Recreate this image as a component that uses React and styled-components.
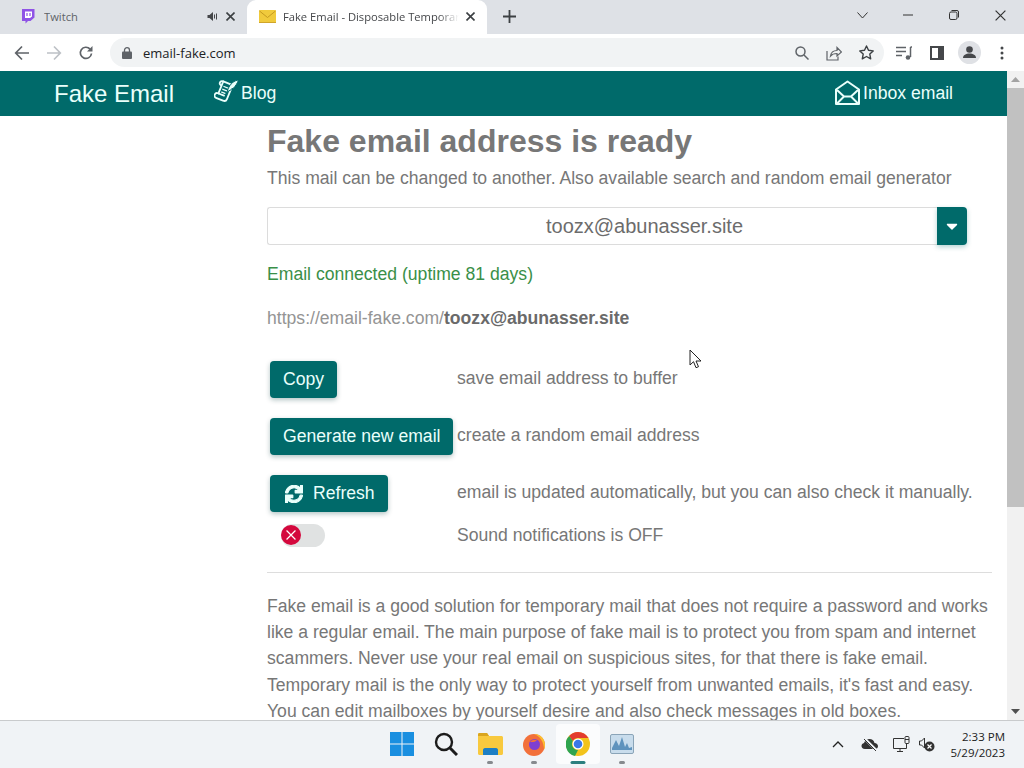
import React from "react";
import styled, { createGlobalStyle } from "styled-components";
import { FaSync, FaCaretDown } from "react-icons/fa";

const Global = createGlobalStyle`
	html, body {
		margin: 0;
		padding: 0;
		overflow: hidden;
	}
	body {
		font-family: "Liberation Sans", Arial, sans-serif;
	}
`;

const Screen = styled.div`
	position: relative;
	width: 1024px;
	height: 768px;
	display: flex;
	flex-direction: column;
	overflow: hidden;
	background: #fff;
`;

/* browser chrome */
const TabStrip = styled.div`
	height: 34px;
	background: #dee1e6;
	display: flex;
	align-items: stretch;
	padding-left: 8px;
	font-family: "Open Sans", sans-serif;
	font-size: 11.2px;
	color: #5f6368;
`;

const Tab = styled.div`
	width: ${(p) => p.$width}px;
	display: flex;
	align-items: center;
	gap: ${(p) => p.$gap}px;
	padding: 0 12px 2px ${(p) => p.$pad}px;
	box-sizing: border-box;
	background: ${(p) => (p.$active ? "#fff" : "transparent")};
	border-radius: 9px 9px 0 0;
	color: ${(p) => (p.$active ? "#45474a" : "#5f6368")};
`;

const TabTitle = styled.span`
	flex: 1;
	white-space: nowrap;
	overflow: hidden;
	mask-image: ${(p) => (p.$fade ? "linear-gradient(90deg, #000 88%, transparent)" : "none")};
`;

const NewTab = styled.div`
	width: 44px;
	padding-bottom: 2px;
	display: flex;
	align-items: center;
	justify-content: center;
`;

const WindowButtons = styled.div`
	margin-left: auto;
	display: flex;
	align-items: center;
	padding: 0 1px 4px 0;
`;

const WindowButton = styled.div`
	width: 46px;
	height: 28px;
	display: flex;
	align-items: center;
	justify-content: center;
`;

const Toolbar = styled.div`
	height: 37px;
	background: #fff;
	display: flex;
	align-items: center;
	padding: 0 6px;
	box-sizing: border-box;
`;

const NavIcon = styled.div`
	width: 32px;
	height: 32px;
	display: flex;
	align-items: center;
	justify-content: center;
`;

const UrlBar = styled.div`
	flex: 1;
	height: 29px;
	margin: 0 4px 0 8px;
	padding: 0 1px 0 12px;
	border-radius: 15px;
	background: #f1f3f4;
	display: flex;
	align-items: center;
	gap: 11px;
	font-family: "Open Sans", sans-serif;
	font-size: 13px;
	color: #202124;
`;

const UrlText = styled.span`
	flex: 1;
`;

const UrlActions = styled.div`
	display: flex;
	align-items: center;
`;

const UrlIcon = styled.div`
	width: 32.5px;
	display: flex;
	justify-content: center;
`;

const ToolIcon = styled.div`
	width: 32.5px;
	height: 32px;
	display: flex;
	align-items: center;
	justify-content: center;
`;

/* page */
const Viewport = styled.div`
	flex: 1;
	min-height: 0;
	display: flex;
`;

const Page = styled.div`
	flex: 1;
	min-width: 0;
	overflow: hidden;
	color: #777;
	font-size: 17.6px;
`;

const Scrollbar = styled.div`
	width: 17px;
	background: #f1f1f1;
	display: flex;
	flex-direction: column;
	align-items: center;
`;

const ScrollArrow = styled.div`
	height: 17px;
	width: 100%;
	display: flex;
	align-items: center;
	justify-content: center;
	margin-top: ${(p) => (p.$end ? "auto" : "0")};
`;

const ScrollThumb = styled.div`
	width: 100%;
	height: 419px;
	background: #c1c1c1;
`;

const NavBar = styled.div`
	height: 45px;
	background: #006a6a;
	color: #eafffb;
	display: flex;
	align-items: center;
	padding: 0 54px;
`;

const Brand = styled.div`
	font-size: 24px;
	width: 160px;
`;

const NavLink = styled.div`
	display: flex;
	align-items: center;
	gap: ${(p) => p.$gap}px;
	font-size: 17.6px;
	margin-left: ${(p) => p.$left || 0};

	svg {
		margin-bottom: 3px;
	}
`;

const Content = styled.main`
	padding: 6px 15px 0 267px;
`;

const Heading = styled.h1`
	margin: 0;
	font-size: 32px;
	line-height: 38px;
	font-weight: 700;
	color: #777;
`;

const Lead = styled.p`
	margin: 5px 0 0;
	line-height: 26px;
`;

const SelectRow = styled.div`
	margin-top: 16px;
	width: 700px;
	height: 38px;
	display: flex;
`;

const SelectValue = styled.div`
	flex: 1;
	border: 1px solid #dcdcdc;
	border-right: 0;
	border-radius: 3px 0 0 3px;
	box-sizing: border-box;
	display: flex;
	align-items: center;
	justify-content: center;
	padding-left: 84px;
	font-size: 20px;
	color: #6c6c6c;
`;

const SelectButton = styled.div`
	width: 30px;
	background: #006a6a;
	border-radius: 0 4px 4px 0;
	color: #fff;
	display: flex;
	align-items: center;
	justify-content: center;
	box-shadow: 0 2px 5px rgba(0, 106, 106, 0.3);
`;

const Status = styled.p`
	margin: 16px 0 0;
	line-height: 26px;
	color: #3a8f48;
`;

const Permalink = styled.p`
	margin: 18px 0 0;
	line-height: 26px;
	color: #949494;

	b {
		color: #6a6a6a;
	}
`;

const ActionRows = styled.div`
	margin-top: 20px;
	display: grid;
	grid-template-columns: 190px 1fr;
	grid-auto-rows: 57px;
	align-items: center;
`;

const ActionButton = styled.button`
	justify-self: start;
	margin-left: 3px;
	height: 37px;
	padding: 0 13px;
	border: 0;
	border-radius: 4px;
	background: #006a6a;
	color: #eafffb;
	font-family: inherit;
	font-size: 17.6px;
	white-space: nowrap;
	display: flex;
	align-items: center;
	gap: 10px;
	box-shadow: 0 2px 5px rgba(0, 60, 60, 0.3);
`;

const RefreshButton = styled(ActionButton)`
	padding: 0 13px 0 15px;

	svg {
		stroke: currentColor;
		stroke-width: 30px;
	}
`;

const ActionText = styled.span`
	white-space: nowrap;
	margin-top: ${(p) => p.$top ?? -2}px;
`;

const ToggleRow = styled.div`
	grid-column: 1 / -1;
	display: grid;
	grid-template-columns: 190px 1fr;
	align-items: center;
	align-self: start;
	margin-top: 1px;
	height: 24px;
`;

const Toggle = styled.div`
	margin-left: 14px;
	width: 44px;
	height: 23px;
	border-radius: 12px;
	background: #e0e2e2;
	display: flex;
	align-items: center;
`;

const ToggleKnob = styled.div`
	width: 20px;
	height: 20px;
	border-radius: 50%;
	background: #d4083d;
	display: flex;
	align-items: center;
	justify-content: center;
`;

const Divider = styled.hr`
	margin: 0;
	width: 725px;
	border: 0;
	border-top: 1px solid #ddd;
`;

const ActionsEnd = styled.div`
	margin-top: -7px;
`;

const Body = styled.p`
	margin: 20px 0 0;
	width: 725px;
	line-height: 26.2px;
`;

/* windows taskbar */
const Taskbar = styled.div`
	height: 48px;
	background: #f0f3f6;
	border-top: 1px solid #c9cbcd;
	box-sizing: border-box;
	display: flex;
	align-items: center;
	position: relative;
`;

const TaskIcons = styled.div`
	display: flex;
	margin-left: 380px;
	margin-bottom: 2px;
`;

const TaskIcon = styled.div`
	position: relative;
	width: 44px;
	height: 40px;
	display: flex;
	align-items: center;
	justify-content: center;
	border-radius: 4px;
	background: ${(p) => (p.$active ? "#fbfcfd" : "transparent")};

	&::after {
		content: "";
		display: ${(p) => (p.$dot ? "block" : "none")};
		position: absolute;
		bottom: 0;
		left: 50%;
		transform: translateX(-50%);
		width: ${(p) => (p.$active ? 15 : 6)}px;
		height: 3px;
		border-radius: 2px;
		background: ${(p) => (p.$active ? "#2b7f7f" : "#868a8e")};
	}
`;

const Tray = styled.div`
	margin-left: auto;
	display: flex;
	align-items: center;
	padding-right: 19px;
`;

const TrayItem = styled.div`
	width: ${(p) => p.$width}px;
	display: flex;
	align-items: center;
	justify-content: center;
`;

const Clock = styled.div`
	margin-left: 15px;
	font-family: "Open Sans", sans-serif;
	font-size: 11.5px;
	text-align: right;
	color: #222;
`;

const ClockLine = styled.div`
	height: 16px;
	line-height: 16px;
`;

const Cursor = styled.svg`
	position: absolute;
	left: 689px;
	top: 349px;
`;

const TwitchLogo = () => (
	<svg width="16" height="16" viewBox="0 0 16 16">
		<path d="M2 1h12.5v8.5L10.5 13H8l-2.5 2.5V13H2z" fill="#8f53e6" />
		<path d="M5 3.5h7v5L10 10H5z" fill="#fff" />
		<path d="M7 5v3M10 5v3" stroke="#8f53e6" strokeWidth="1.2" />
	</svg>
);

const MailLogo = () => (
	<svg width="17" height="13" viewBox="0 0 17 13">
		<rect width="17" height="13" rx="1" fill="#f0ca3c" />
		<path d="M0.5 1l8 6.5 8-6.5" fill="none" stroke="#c59a20" strokeWidth="1" />
		<path d="M0 12.5h17" stroke="#d0a52a" />
	</svg>
);

const SpeakerIcon = () => (
	<svg width="11" height="11" viewBox="0 0 11 11">
		<path d="M0.5 4h2L6 1v9L2.5 7h-2z" fill="#45474a" />
		<path d="M7.5 3.5v4M9.5 2.5v6" stroke="#45474a" />
	</svg>
);

const CloseIcon = ({ size = 9, color = "#3c4043", width = 1.6 }) => (
	<svg width={size} height={size} viewBox="0 0 9 9">
		<path d="M0.5 0.5l8 8M8.5 0.5l-8 8" stroke={color} strokeWidth={width} fill="none" />
	</svg>
);

const BlogIcon = () => (
	<svg width="25" height="26" viewBox="0 0 25 26" fill="none" stroke="#eafffb" strokeWidth="1.8" strokeLinejoin="round" strokeLinecap="round">
		<g transform="rotate(22 10 14)">
			<path d="M5 3.500h10v15c0 2-1.300 3-3 3H5c-2 0-3-1-3-2.500s1-2.500 2.500-2.500h6.500" />
			<path d="M5 3.500c-2 0-3 1.300-2.700 2.800.2 1 1 1.700 2.700 1.700M5 3.500V16.500" />
			<path d="M7.500 8h5M7.500 11h5M7.500 14h3.500" strokeWidth="1.300" />
		</g>
		<path d="M24.500 1c-4.500 .5-8 3.500-10.500 9l-1 3.500 2-1.800 1.500-.4 1-1.500 1.500-.2c2.500-2.500 4.500-5.300 5.500-8.600z" fill="#eafffb" stroke="#006a6a" strokeWidth="1" />
	</svg>
);

const InboxIcon = () => (
	<svg width="25" height="25" viewBox="0 0 25 25" fill="none" stroke="#eafffb" strokeWidth="2" strokeLinejoin="round">
		<path d="M1 9.500L12.500 1.500 24 9.500V24H1z" />
		<path d="M2 10l7 6.500h7l7-6.500M2 23.500L9 16.500M23 23.500L16 16.500" />
	</svg>
);

const Back = ({ color = "#5f6368" }) => (
	<svg width="16" height="16" viewBox="0 0 16 16" fill="none" stroke={color} strokeWidth="1.7">
		<path d="M15 8H2M8 1.500L1.700 8 8 14.500" />
	</svg>
);

const Reload = () => (
	<svg width="16" height="16" viewBox="0 0 16 16" fill="none">
		<path d="M13.500 8.500a5.600 5.600 0 1 1-1.400-4.400" stroke="#5f6368" strokeWidth="1.7" />
		<path d="M14.500 1v5.500H9z" fill="#5f6368" />
	</svg>
);

const Lock = () => (
	<svg width="10" height="12" viewBox="0 0 10 12">
		<rect y="4.500" width="10" height="7.500" rx="1" fill="#5f6368" />
		<path d="M2.500 5V3.200a2.500 2.500 0 0 1 5 0V5" fill="none" stroke="#5f6368" strokeWidth="1.300" />
	</svg>
);

const GREY = "#5f6368";

const Taskicons = {
	windows: (
		<svg width="24" height="24" viewBox="0 0 24 24">
			<path d="M0 0h11.500v11.500H0zM12.500 0H24v11.500H12.500zM0 12.500h11.500V24H0zM12.500 12.500H24V24H12.500z" fill="#1a8fe0" />
		</svg>
	),
	search: (
		<svg width="24" height="24" viewBox="0 0 24 24" fill="none" stroke="#1c1c1c">
			<circle cx="10" cy="10" r="8" strokeWidth="2.400" />
			<path d="M16 16l7 7" strokeWidth="3" />
		</svg>
	),
	files: (
		<svg width="25" height="22" viewBox="0 0 25 22">
			<path d="M0 1.500C0 .7.700 0 1.500 0H9l2 3h12.500c.8 0 1.500.7 1.500 1.500V20.500c0 .8-.7 1.500-1.500 1.500h-22C.7 22 0 21.300 0 20.500z" fill="#f8c93e" />
			<path d="M0 1.500C0 .7.700 0 1.500 0H9l2 3H0z" fill="#d9a520" />
			<path d="M5 22v-5c0-1 .7-2 2-2h11c1.300 0 2 1 2 2v5z" fill="#1d7fc4" />
		</svg>
	),
	firefox: (
		<svg width="24" height="24" viewBox="0 0 24 24">
			<circle cx="12" cy="13" r="11" fill="#f2703a" />
			<path d="M12 2c6 0 11 4.500 11 11 0 2-.5 3.500-1 4.500C22 10 18 4 12 2z" fill="#fbc02d" />
			<circle cx="12.500" cy="12.500" r="5.500" fill="#7e3fd1" />
			<path d="M8 10c2-2.500 5-3 7-1.500l-3 1.500z" fill="#f2703a" />
		</svg>
	),
	chrome: (
		<svg width="24" height="24" viewBox="0 0 24 24">
			<circle cx="12" cy="12" r="12" fill="#f2c31c" />
			<path d="M12 0a12 12 0 0 1 10.400 6H12a6 6 0 0 0-5.200 3L3.200 3.900A12 12 0 0 1 12 0z" fill="#e33b2e" />
			<path d="M3.200 3.900L6.800 9a6 6 0 0 0 5.200 9l-3 6A12 12 0 0 1 3.200 3.900z" fill="#2fa44f" />
			<circle cx="12" cy="12" r="5.500" fill="#fff" />
			<circle cx="12" cy="12" r="4.300" fill="#3b78e7" />
		</svg>
	),
	monitor: (
		<svg width="24" height="20" viewBox="0 0 24 20">
			<rect x=".5" y=".5" width="23" height="19" rx="1.500" fill="#c8dcec" stroke="#8aa4b8" />
			<path d="M2 14l4-8 3 6 3-9 3 10 2-4 2 5 3-1v3H2z" fill="#5f93bd" />
		</svg>
	),
};

const App = () => {
	return (
		<Screen>
			<Global />
			<TabStrip>
				<Tab $width={239} $pad={12} $gap={8}>
					<TwitchLogo />
					<TabTitle>Twitch</TabTitle>
					<SpeakerIcon />
					<CloseIcon />
				</Tab>
				<Tab $width={240} $active $pad={12} $gap={7}>
					<MailLogo />
					<TabTitle $fade>Fake Email - Disposable Temporary E-mail</TabTitle>
					<CloseIcon />
				</Tab>
				<NewTab>
					<svg width="13" height="13" viewBox="0 0 13 13">
						<path d="M6.500 0v13M0 6.500h13" stroke="#3c4043" strokeWidth="1.800" />
					</svg>
				</NewTab>
				<WindowButtons>
					<WindowButton>
						<svg width="11" height="7" viewBox="0 0 11 7" fill="none" stroke="#333">
							<path d="M.5.500l5 5.500 5-5.500" />
						</svg>
					</WindowButton>
					<WindowButton>
						<svg width="10" height="2" viewBox="0 0 10 2">
							<path d="M0 1h10" stroke="#333" />
						</svg>
					</WindowButton>
					<WindowButton>
						<svg width="10" height="10" viewBox="0 0 10 10" fill="none" stroke="#333">
							<rect x=".5" y="2" width="7.500" height="7.500" rx="1.500" />
							<path d="M2.500 .5h5.500a1.500 1.500 0 0 1 1.500 1.500v5.500" />
						</svg>
					</WindowButton>
					<WindowButton>
						<CloseIcon size={11} color="#333" width={1} />
					</WindowButton>
				</WindowButtons>
			</TabStrip>
			<Toolbar>
				<NavIcon>
					<Back />
				</NavIcon>
				<NavIcon>
					<svg width="16" height="16" viewBox="0 0 16 16" fill="none" stroke="#bdc1c6" strokeWidth="1.700">
						<path d="M1 8h13M8 1.500L14.300 8 8 14.500" />
					</svg>
				</NavIcon>
				<NavIcon>
					<Reload />
				</NavIcon>
				<UrlBar>
					<Lock />
					<UrlText>email-fake.com</UrlText>
					<UrlActions>
						<UrlIcon>
							<svg width="14" height="14" viewBox="0 0 14 14" fill="none" stroke={GREY} strokeWidth="1.500">
								<circle cx="5.500" cy="5.500" r="4.500" />
								<path d="M9 9l4.500 4.500" />
							</svg>
						</UrlIcon>
						<UrlIcon>
							<svg width="16" height="16" viewBox="0 0 16 16" fill="none" stroke={GREY} strokeWidth="1.200">
								<path d="M1 6v9h11v-3.500" />
								<path d="M4.500 11c.5-3.500 3-5.500 6.500-5.500V2.500l4.500 4.500L11 11V8.500c-2.500 0-5 .7-6.500 2.500z" />
							</svg>
						</UrlIcon>
						<UrlIcon>
							<svg width="15" height="15" viewBox="0 0 15 15" fill="none" stroke="#3c4043" strokeWidth="1.400" strokeLinejoin="round">
								<path d="M7.500 1l2 4.300 4.700.6-3.400 3.200.9 4.700-4.200-2.300-4.200 2.300.9-4.700L.8 5.900l4.700-.6z" />
							</svg>
						</UrlIcon>
					</UrlActions>
				</UrlBar>
				<ToolIcon>
					<svg width="16" height="14" viewBox="0 0 16 14" fill="none" stroke={GREY} strokeWidth="1.500">
						<path d="M0 1.500h10M0 5.500h10M0 9.500h6" />
						<path d="M14.500 1v10M14.500 1h1.500" />
						<circle cx="12" cy="11.500" r="2.300" fill={GREY} stroke="none" />
					</svg>
				</ToolIcon>
				<ToolIcon>
					<svg width="14" height="14" viewBox="0 0 14 14">
						<path d="M0 0h14v14H0zM2 2v10h6V2z" fill="#45474a" fillRule="evenodd" />
						<rect x="8" y="2" width="4" height="10" fill="#45474a" />
					</svg>
				</ToolIcon>
				<ToolIcon>
					<svg width="23" height="23" viewBox="0 0 23 23">
						<circle cx="11.500" cy="11.500" r="11.500" fill="#dfe1e5" />
						<circle cx="11.500" cy="8.500" r="3.300" fill="#45474a" />
						<path d="M5 17c0-3 3-4.500 6.500-4.500S18 14 18 17z" fill="#45474a" />
					</svg>
				</ToolIcon>
				<ToolIcon>
					<svg width="4" height="14" viewBox="0 0 4 14" fill="#45474a">
						<circle cx="2" cy="2" r="1.500" />
						<circle cx="2" cy="7" r="1.500" />
						<circle cx="2" cy="12" r="1.500" />
					</svg>
				</ToolIcon>
			</Toolbar>
			<Viewport>
				<Page>
					<NavBar>
						<Brand>Fake Email</Brand>
						<NavLink $gap={2}>
							<BlogIcon />
							Blog
						</NavLink>
						<NavLink $gap={3} $left="auto">
							<InboxIcon />
							Inbox email
						</NavLink>
					</NavBar>
					<Content>
						<Heading>Fake email address is ready</Heading>
						<Lead>This mail can be changed to another. Also available search and random email generator</Lead>
						<SelectRow>
							<SelectValue>toozx@abunasser.site</SelectValue>
							<SelectButton>
								<FaCaretDown size={18} />
							</SelectButton>
						</SelectRow>
						<Status>Email connected (uptime 81 days)</Status>
						<Permalink>
							https://email-fake.com/<b>toozx@abunasser.site</b>
						</Permalink>
						<ActionRows>
							<ActionButton>Copy</ActionButton>
							<ActionText>save email address to buffer</ActionText>
							<ActionButton>Generate new email</ActionButton>
							<ActionText>create a random email address</ActionText>
							<RefreshButton>
								<FaSync size={18} />
								Refresh
							</RefreshButton>
							<ActionText>email is updated automatically, but you can also check it manually.</ActionText>
							<ToggleRow>
								<Toggle>
									<ToggleKnob>
										<CloseIcon size={10} color="#fff" width={1.1} />
									</ToggleKnob>
								</Toggle>
								<ActionText $top={0}>Sound notifications is OFF</ActionText>
							</ToggleRow>
						</ActionRows>
						<ActionsEnd>
							<Divider />
						</ActionsEnd>
						<Body>
							Fake email is a good solution for temporary mail that does not require a password and works like a regular email. The main purpose of fake mail is to protect you from spam and internet scammers. Never use your real email on suspicious sites, for that there is fake email. Temporary mail is the only way to protect yourself from unwanted emails, it's fast and easy. You can edit mailboxes by yourself desire and also check messages in old boxes.
						</Body>
					</Content>
				</Page>
				<Scrollbar>
					<ScrollArrow>
						<svg width="9" height="5" viewBox="0 0 9 5">
							<path d="M4.500 0L9 5H0z" fill="#a3a3a3" />
						</svg>
					</ScrollArrow>
					<ScrollThumb />
					<ScrollArrow $end>
						<svg width="9" height="5" viewBox="0 0 9 5">
							<path d="M4.500 5L9 0H0z" fill="#505050" />
						</svg>
					</ScrollArrow>
				</Scrollbar>
			</Viewport>
			<Taskbar>
				<TaskIcons>
					<TaskIcon>{Taskicons.windows}</TaskIcon>
					<TaskIcon>{Taskicons.search}</TaskIcon>
					<TaskIcon $dot>{Taskicons.files}</TaskIcon>
					<TaskIcon $dot>{Taskicons.firefox}</TaskIcon>
					<TaskIcon $dot $active>
						{Taskicons.chrome}
					</TaskIcon>
					<TaskIcon $dot>{Taskicons.monitor}</TaskIcon>
				</TaskIcons>
				<Tray>
					<TrayItem $width={32}>
						<svg width="12" height="7" viewBox="0 0 12 7" fill="none" stroke="#222" strokeWidth="1.300">
							<path d="M1 6l5-5 5 5" />
						</svg>
					</TrayItem>
					<TrayItem $width={32}>
						<svg width="18" height="15" viewBox="0 0 18 15">
							<path d="M4 12C1.500 12 .5 10.500 .5 9c0-1.500 1-2.700 2.500-3C4 3.500 6 2 8.500 2c2.500 0 4.500 1.500 5 4 2 .2 3.500 1.500 3.500 3.200 0 1.600-1.200 2.800-3 2.800z" fill="#333" />
							<path d="M3 1l13 13" stroke="#f0f3f6" strokeWidth="2.500" />
							<path d="M3 2l12 12" stroke="#333" strokeWidth="1" />
						</svg>
					</TrayItem>
					<TrayItem $width={32}>
						<svg width="18" height="18" viewBox="0 0 18 18" fill="none" stroke="#333">
							<path d="M11 2.500H.5v10h13V8" />
							<path d="M4 15.500h6M7 12.500v3" />
							<rect x="12" y=".5" width="4" height="7" rx="1" />
							<path d="M12 3.500h4" />
						</svg>
					</TrayItem>
					<TrayItem $width={18}>
						<svg width="16" height="15" viewBox="0 0 16 15">
							<path d="M5.500 1L2.500 4H.5v4h2l3 3z" fill="none" stroke="#333" />
							<circle cx="10.500" cy="9.500" r="5" fill="#333" />
							<path d="M8.500 7.500l4 4M12.500 7.500l-4 4" stroke="#fff" strokeWidth="1.200" />
						</svg>
					</TrayItem>
					<Clock>
						<ClockLine>2:33 PM</ClockLine>
						<ClockLine>5/29/2023</ClockLine>
					</Clock>
				</Tray>
			</Taskbar>
			<Cursor width="13" height="20" viewBox="0 0 13 20">
				<path d="M1 1v15l3.500-3.300 2.500 6 2.500-1-2.500-5.700h5z" fill="#fff" stroke="#222" strokeWidth="1" strokeLinejoin="round" />
			</Cursor>
		</Screen>
	);
};

export default App;
